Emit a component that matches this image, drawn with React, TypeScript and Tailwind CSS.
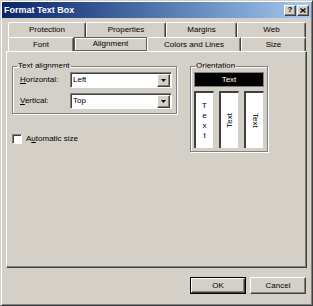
import React from "react"

const raised =
  "border border-t-white border-l-white border-r-[#404040] border-b-[#404040] shadow-[inset_-1px_-1px_0_#808080]"
const sunken =
  "border border-t-[#808080] border-l-[#808080] border-r-white border-b-white shadow-[inset_1px_1px_0_#404040]"
const etched =
  "border border-[#808080] shadow-[inset_1px_1px_0_#ffffff,1px_1px_0_#ffffff]"

function Tab({ label, w, h, selected }: { label: string; w: string; h: string; selected?: boolean }) {
  if (selected) {
    return (
      <div className={`${w} ${h} flex items-center justify-center border border-[#606060] shadow-[inset_1px_1px_0_#ffffff]`}>
        {label}
      </div>
    )
  }
  return (
    <div
      className={`${w} ${h} flex items-center justify-center rounded-t-[2px] border-t border-l border-r border-t-white border-l-white border-r-[#404040] shadow-[inset_-1px_0_0_#808080]`}
    >
      {label}
    </div>
  )
}

function Select({ value }: { value: string }) {
  return (
    <div className={`w-[102px] h-[16px] bg-white flex items-center justify-between ${sunken}`}>
      <span className="pl-[2px]">{value}</span>
      <div className={`w-[13px] h-[13px] mr-[1px] bg-[#d4d0c8] flex items-center justify-center ${raised}`}>
        <svg width="5" height="3" viewBox="0 0 5 3">
          <path d="M0 0h5L2.5 3z" fill="#000" />
        </svg>
      </div>
    </div>
  )
}

function Button({ label, primary }: { label: string; primary?: boolean }) {
  return (
    <div className={primary ? "border border-black" : ""}>
      <div
        className={`${primary ? "w-[54px] h-[15px]" : "w-[56px] h-[17px]"} bg-[#d4d0c8] flex items-center justify-center ${raised}`}
      >
        {label}
      </div>
    </div>
  )
}

export default function App() {
  return (
    <div
      className={`w-[313px] h-[306px] bg-[#d4d0c8] p-[1px] text-[8px] leading-[10px] text-black font-['Liberation_Sans',Arial,sans-serif] border border-t-[#d4d0c8] border-l-[#d4d0c8] border-r-[#404040] border-b-[#404040] shadow-[inset_1px_1px_0_#ffffff,inset_-1px_-1px_0_#808080]`}
    >
      {/* title bar */}
      <div className="h-[16px] bg-linear-to-r from-[#0a246a] to-[#a6caf0] flex items-center justify-between pl-[2px] pr-[2px]">
        <span className="text-white font-bold text-[9px]">Format Text Box</span>
        <div className="flex gap-[1px]">
          <div className={`w-[12px] h-[11px] bg-[#d4d0c8] flex items-center justify-center font-bold text-[8px] ${raised}`}>?</div>
          <div className={`w-[12px] h-[11px] bg-[#d4d0c8] flex items-center justify-center ${raised}`}>
            <svg width="6" height="5" viewBox="0 0 6 5">
              <path d="M0.5 0.5L5.5 4.5M5.5 0.5L0.5 4.5" stroke="#000" strokeWidth="1.3" />
            </svg>
          </div>
        </div>
      </div>

      {/* tabs */}
      <div className="mt-[4px] pl-[6px] flex flex-col">
        <div className="flex">
          <Tab label="Protection" w="w-[78px]" h="h-[15px]" />
          <Tab label="Properties" w="w-[80px]" h="h-[15px]" />
          <Tab label="Margins" w="w-[71px]" h="h-[15px]" />
          <Tab label="Web" w="w-[69px]" h="h-[15px]" />
        </div>
        <div className="flex">
          <Tab label="Font" w="w-[66px]" h="h-[14px]" />
          <Tab label="Alignment" w="w-[73px]" h="h-[14px]" selected />
          <Tab label="Colors and Lines" w="w-[94px]" h="h-[14px]" />
          <Tab label="Size" w="w-[65px]" h="h-[14px]" />
        </div>
      </div>

      {/* panel */}
      <div className={`ml-[4px] w-[301px] h-[217px] ${raised} pl-[5px] pt-[9px] flex`}>
        <div className="w-[165px] flex flex-col">
          <fieldset className={`${etched} px-[7px] pr-[4px] pb-[4px]`}>
            <legend className="-ml-[3px] px-[1px]">Text alignment</legend>
            <div className="mt-[1px] flex flex-col gap-[5px]">
              <div className="flex items-center">
                <span className="w-[50px]">
                  <span className="underline">H</span>orizontal:
                </span>
                <Select value="Left" />
              </div>
              <div className="flex items-center">
                <span className="w-[50px]">
                  <span className="underline">V</span>ertical:
                </span>
                <Select value="Top" />
              </div>
            </div>
          </fieldset>
          <div className="mt-[20px] flex items-center gap-[4px]">
            <div className={`w-[10px] h-[10px] bg-white ${sunken}`} />
            <span>
              A<span className="underline">u</span>tomatic size
            </span>
          </div>
        </div>

        <fieldset className={`ml-[13px] w-[78px] h-[91px] ${etched} pl-[3px] pb-[3px]`}>
          <legend className="ml-[1px] px-[1px]">Orientation</legend>
          <div className="mt-[1px] flex flex-col gap-[4px]">
            <div className="w-[70px] h-[15px] bg-black text-white flex items-center justify-center border border-[#808080]">
              Text
            </div>
            <div className="flex gap-[5px]">
              <div className="w-[20px] h-[57px] bg-white border-l-2 border-t-2 border-[#404040] border-r border-r-[#d4d0c8] flex flex-col items-center pt-[8px] leading-[10px]">
                <span>T</span>
                <span>e</span>
                <span>x</span>
                <span>t</span>
              </div>
              <div className="w-[20px] h-[57px] bg-white border-l-2 border-t-2 border-[#404040] border-r border-r-[#d4d0c8] flex items-center justify-center">
                <span className="[writing-mode:vertical-rl] rotate-180">Text</span>
              </div>
              <div className="w-[20px] h-[57px] bg-white border-l-2 border-t-2 border-[#404040] border-r border-r-[#d4d0c8] flex items-center justify-center">
                <span className="[writing-mode:vertical-rl]">Text</span>
              </div>
            </div>
          </div>
        </fieldset>
      </div>

      {/* buttons */}
      <div className="mt-[9px] pr-[5px] flex justify-end gap-[4px]">
        <Button label="OK" primary />
        <Button label="Cancel" />
      </div>
    </div>
  )
}
